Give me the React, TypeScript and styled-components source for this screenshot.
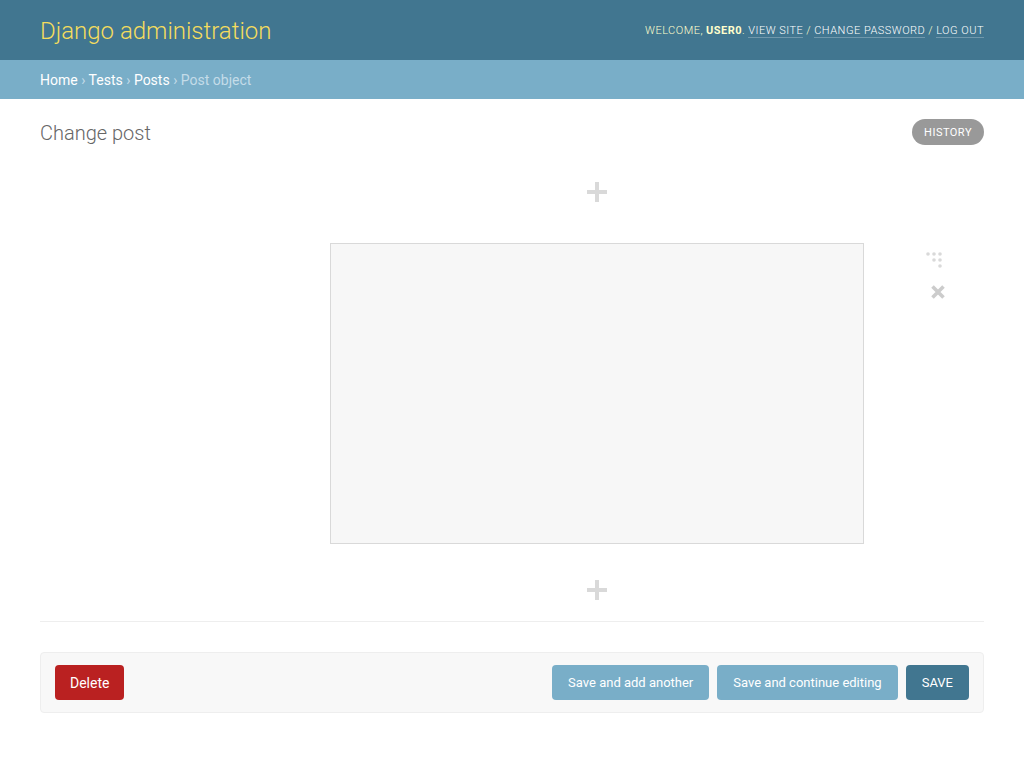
import React from "react";
import styled, { createGlobalStyle } from "styled-components";

const GlobalStyle = createGlobalStyle`
  *, *::before, *::after { box-sizing: border-box; }
  body {
    margin: 0;
    background: #fff;
    color: #333;
    font-family: Roboto, "Liberation Sans", sans-serif;
    font-size: 14px;
  }
  button { font-family: inherit; cursor: pointer; }
`;

const Header = styled.header`
  display: flex;
  align-items: center;
  justify-content: space-between;
  padding: 11px 40px 9px;
  min-height: 60px;
  background: #417690;
  color: #ffc;
`;

const SiteName = styled.h1`
  margin: 0;
  font-size: 24px;
  font-weight: 300;
  line-height: 40px;
  color: #f5dd5d;
`;

const UserTools = styled.div`
  display: flex;
  gap: 3px;
  font-size: 11px;
  font-weight: 300;
  line-height: 12px;
  letter-spacing: 0.045em;
  text-transform: uppercase;
  strong { font-weight: 700; }
`;

const UserLink = styled.a`
  color: #fff;
  text-decoration: none;
  border-bottom: 1px solid rgba(255, 255, 255, 0.25);
`;

const Breadcrumbs = styled.nav`
  padding: 11px 40px 9px;
  line-height: 19px;
  background: #79aec8;
  color: #c4dce8;
`;

const Crumb = styled.a`
  color: #fff;
  text-decoration: none;
`;

const Content = styled.main`
  padding: 20px 40px;
`;

const TitleRow = styled.div`
  display: flex;
  align-items: flex-start;
  justify-content: space-between;
`;

const Title = styled.h2`
  margin: 0;
  font-size: 20px;
  font-weight: 300;
  line-height: 28px;
  color: #666;
`;

const HistoryLink = styled.a`
  padding: 7px 12px 5px;
  border-radius: 15px;
  background: #999;
  color: #fff;
  font-size: 11px;
  font-weight: 400;
  line-height: 14px;
  letter-spacing: 0.045em;
  text-transform: uppercase;
  text-decoration: none;
`;

const Editor = styled.section`
  display: grid;
  grid-template-columns: 290px 1fr 120px;
  padding: 33px 0 19px;
  border-bottom: 1px solid #eee;
`;

const AddSlot = styled.div`
  grid-column: 2;
  display: flex;
  justify-content: center;
`;

const Block = styled.div`
  grid-column: 2;
  min-height: 301px;
  margin: 39px 0 34px;
  border: 1px solid #d9d9d9;
  background: #f7f7f7;
`;

const BlockTools = styled.div`
  grid-column: 3;
  display: flex;
  flex-direction: column;
  align-items: flex-start;
  gap: 12px;
  padding: 46px 0 0 60px;
`;

const IconButton = styled.button`
  display: flex;
  padding: 0;
  border: 0;
  background: none;
  color: #d9d9d9;
`;

const SubmitRow = styled.div`
  display: flex;
  align-items: center;
  gap: 8px;
  margin-top: 30px;
  padding: 12px 14px;
  border: 1px solid #eee;
  border-radius: 4px;
  background: #f8f8f8;
`;

const DeleteLink = styled.a`
  margin-right: auto;
  padding: 11px 15px 9px;
  border-radius: 4px;
  background: #ba2121;
  color: #fff;
  line-height: 15px;
  text-decoration: none;
`;

const SubmitButton = styled.button<{ $primary?: boolean }>`
  padding: 10px 16px;
  border: 0;
  border-radius: 4px;
  background: ${(p) => (p.$primary ? "#417690" : "#79aec8")};
  color: #fff;
  font-size: 13px;
  line-height: 15px;
  text-transform: ${(p) => (p.$primary ? "uppercase" : "none")};
`;

const AddButton = () => (
  <AddSlot>
    <IconButton type="button" aria-label="Add block">
      <svg width="24" height="24" viewBox="0 0 24 24" fill="currentColor">
        <path d="M10 2h4v8h8v4h-8v8h-4v-8H2v-4h8z" />
      </svg>
    </IconButton>
  </AddSlot>
);

const dots = [[4, 4], [10, 4], [16, 4], [10, 10], [16, 10], [16, 16]];

export default function App() {
  return (
    <>
      <GlobalStyle />
      <Header>
        <SiteName>Django administration</SiteName>
        <UserTools>
          <span>Welcome,</span>
          <span><strong>user0</strong>.</span>
          <UserLink href="#site">View site</UserLink>
          <span>/</span>
          <UserLink href="#password">Change password</UserLink>
          <span>/</span>
          <UserLink href="#logout">Log out</UserLink>
        </UserTools>
      </Header>
      <Breadcrumbs aria-label="Breadcrumbs">
        <Crumb href="#home">Home</Crumb> › <Crumb href="#tests">Tests</Crumb> ›{" "}
        <Crumb href="#posts">Posts</Crumb> › Post object
      </Breadcrumbs>
      <Content>
        <TitleRow>
          <Title>Change post</Title>
          <HistoryLink href="#history">History</HistoryLink>
        </TitleRow>
        <Editor>
          <AddButton />
          <Block />
          <BlockTools>
            <IconButton type="button" aria-label="Move block">
              <svg width="20" height="20" viewBox="0 0 20 20" fill="currentColor">
                {dots.map(([x, y]) => (
                  <circle key={`${x}-${y}`} cx={x} cy={y} r="1.8" />
                ))}
              </svg>
            </IconButton>
            <IconButton type="button" aria-label="Remove block">
              <svg width="28" height="20" viewBox="0 0 28 20" stroke="#ccc" strokeWidth="3.6">
                <path d="M8.5 4.5l11 11M19.5 4.5l-11 11" />
              </svg>
            </IconButton>
          </BlockTools>
          <AddButton />
        </Editor>
        <SubmitRow>
          <DeleteLink href="#delete">Delete</DeleteLink>
          <SubmitButton type="button">Save and add another</SubmitButton>
          <SubmitButton type="button">Save and continue editing</SubmitButton>
          <SubmitButton type="submit" $primary>Save</SubmitButton>
        </SubmitRow>
      </Content>
    </>
  );
}
